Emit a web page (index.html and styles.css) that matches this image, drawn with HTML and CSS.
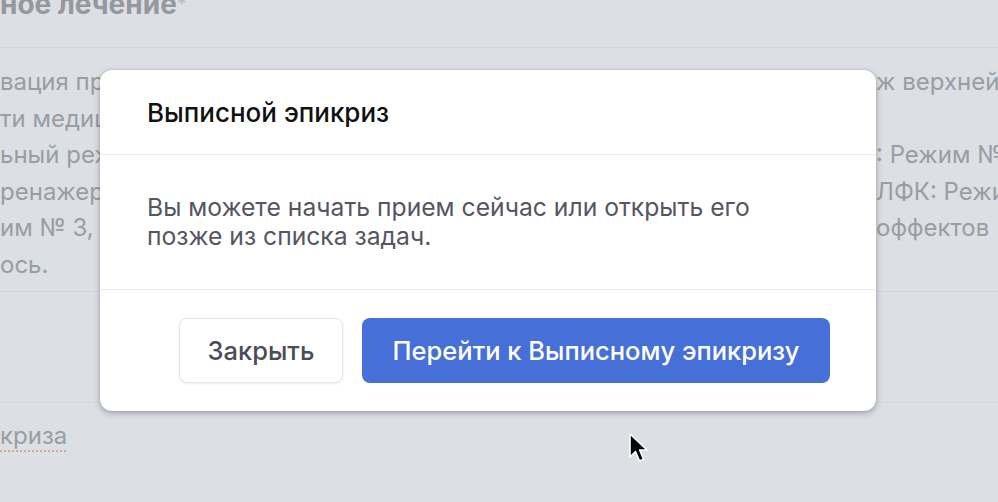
FILE: index.html
```html
<!DOCTYPE html>
<html lang="ru">
<head>
<meta charset="utf-8">
<link rel="stylesheet" href="styles.css">
</head>
<body>
<div class="page">
  <div class="heading">ное лечение<span class="req">*</span></div>
  <div class="rows">
    <div class="row"><span class="l">вация при</span><span class="m"></span><span class="r">ж верхней</span></div>
    <div class="row"><span class="l">ти медици</span><span class="m"></span><span class="r"></span></div>
    <div class="row"><span class="l">ьный режи</span><span class="m"></span><span class="r">: Режим №</span></div>
    <div class="row"><span class="l">ренажеры</span><span class="m"></span><span class="r">ЛФК: Режим</span></div>
    <div class="row"><span class="l">им № 3, КТ</span><span class="m"></span><span class="r">оффектов</span></div>
    <div class="row"><span class="l">ось.</span><span class="m"></span><span class="r"></span></div>
  </div>
  <div class="blank"></div>
  <div class="field"><span class="spell">криза</span></div>
</div>

<div class="modal">
  <div class="modal-head">Выписной эпикриз</div>
  <div class="modal-body">Вы можете начать прием сейчас или открыть его<br>позже из списка задач.</div>
  <div class="modal-foot">
    <button class="btn btn-light">Закрыть</button>
    <button class="btn btn-primary">Перейти к Выписному эпикризу</button>
  </div>
</div>

<svg class="cursor" width="24" height="34" viewBox="0 0 24 34">
  <path d="M2 2 L2 25 L7.5 19.5 L11.5 29 L15.5 27.3 L11.6 18 L19 18 Z" fill="#000" stroke="#fff" stroke-width="1.6" stroke-linejoin="round"/>
</svg>
</body>
</html>
```
FILE: styles.css
```css
html, body {
  margin: 0;
  padding: 0;
  width: 998px;
  height: 502px;
  overflow: hidden;
  background: #dcdfe4;
  font-family: Inter, "Liberation Sans", Arial, sans-serif;
}

.page {
  display: flex;
  flex-direction: column;
  color: #9a9da3;
}

.heading {
  margin-top: -9px;
  font-size: 28px;
  font-weight: 700;
  color: #95989e;
  line-height: 27px;
  padding-bottom: 29px;
  border-bottom: 1px solid #d3d6db;
  white-space: nowrap;
}
.req { color: #b4b7bc; font-weight: 400; font-size: 20px; vertical-align: top; }

.rows {
  padding-top: 16px;
  padding-bottom: 8px;
  border-bottom: 1px solid #d3d6db;
}
.row {
  display: grid;
  grid-template-columns: 100px 776px 1fr;
  font-size: 24px;
  line-height: 36px;
  height: 36.5px;
  white-space: nowrap;
}
.row span { overflow: hidden; }

.blank {
  height: 110px;
  border-bottom: 1px solid #d3d6db;
}

.field {
  padding-top: 18px;
  font-size: 24px;
  line-height: 30px;
}
.spell {
  text-decoration: underline dotted #e0a0a0;
  text-decoration-thickness: 2px;
  text-underline-offset: 6px;
}

.modal {
  position: absolute;
  left: 100px;
  top: 70px;
  width: 776px;
  background: #fff;
  border-radius: 12px;
  box-shadow: 0 2px 6px rgba(0,0,0,0.3), 0 0 1px rgba(0,0,0,0.2);
  display: flex;
  flex-direction: column;
}

.modal-head {
  height: 84px;
  display: flex;
  align-items: center;
  padding-left: 47px;
  font-size: 26px;
  font-weight: 500;
  color: #111;
  border-bottom: 1px solid #ebebef;
}

.modal-body {
  padding: 38px 47px 38px 47px;
  font-size: 24.7px;
  line-height: 29px;
  color: #55565f;
  border-bottom: 1px solid #ebebef;
}

.modal-foot {
  display: flex;
  justify-content: flex-end;
  gap: 19px;
  padding: 28px 46px 28px 47px;
}

.btn {
  font-family: Inter, "Liberation Sans", Arial, sans-serif;
  font-size: 25.5px;
  font-weight: 500;
  height: 65px;
  border-radius: 8px;
  border: none;
  cursor: pointer;
}
.btn-light {
  width: 164px;
  background: #fff;
  color: #4b4c57;
  border: 1px solid #e6e7ec;
  box-shadow: 0 1px 3px rgba(0,0,0,0.08);
}
.btn-primary {
  width: 468px;
  background: #4670d8;
  color: #fff;
}

.cursor {
  position: absolute;
  left: 628px;
  top: 432px;
}
```
